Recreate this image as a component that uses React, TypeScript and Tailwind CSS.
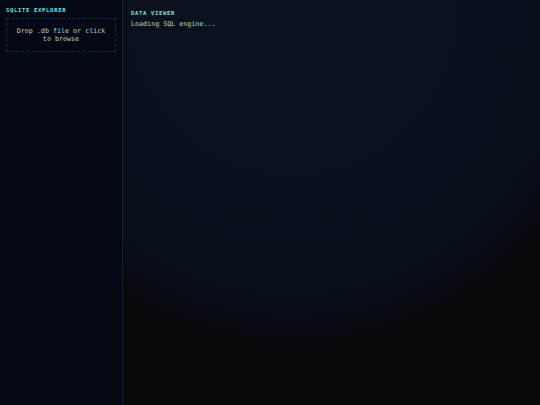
import React from "react";

export default function App() {
  return (
    <div
      className="flex h-[405px] w-[540px] overflow-hidden bg-[#08090c]"
      style={{ fontFamily: '"DejaVu Sans Mono", "Liberation Mono", monospace' }}
    >
      <aside className="flex w-[123px] shrink-0 flex-col border-r border-[#0e2628] bg-[#040814] px-[6px] pt-[6px]">
        <h2 className="text-[5.5px] font-bold leading-[8px] tracking-[0.7px] text-[#6ee7d8]">
          SQLITE EXPLORER
        </h2>
        <div className="mt-[4px] flex h-[34px] w-[110px] items-center justify-center border border-dashed border-[#133537] text-center text-[6.7px] leading-[8px] text-[#a9dcd5]">
          Drop .db file or click
          <br />
          to browse
        </div>
      </aside>
      <main className="relative flex-1 bg-[radial-gradient(ellipse_330px_345px_at_170px_0px,#0c1221_0%,#0a0f1c_86%,#08090c_100%)] px-[8px] pt-[9px]">
        <h2 className="text-[5.5px] font-bold leading-[8px] tracking-[0.7px] text-[#6ee7d8]">
          DATA VIEWER
        </h2>
        <p className="mt-[3px] text-[6.7px] leading-[8px] text-[#a9dcd5]">Loading SQL engine...</p>
      </main>
    </div>
  );
}
